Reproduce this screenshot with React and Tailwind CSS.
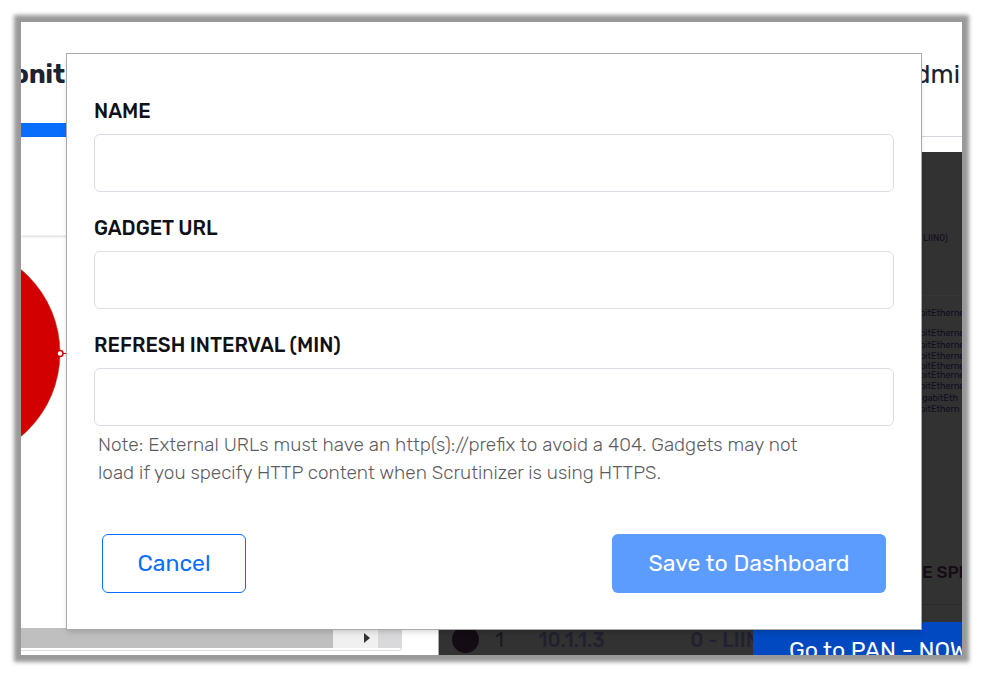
import { useState } from "react";

const FIELDS = [
  { id: "name", label: "NAME" },
  { id: "url", label: "GADGET URL" },
  { id: "interval", label: "REFRESH INTERVAL (MIN)" },
];

const INTERFACES = [
  { y: 164, text: "bitEtherne" },
  { y: 184, text: "bitEtherne" },
  { y: 196, text: "bitEtherne" },
  { y: 207, text: "bitEtherne" },
  { y: 217, text: "bitEtherne" },
  { y: 226, text: "bitEtherne" },
  { y: 237, text: "bitEtherne" },
  { y: 249, text: "igabitEth" },
  { y: 260, text: "bitEthern" },
];

function Header() {
  return (
    <header className="flex h-[115px] shrink-0 items-stretch justify-between border-b border-[#d3d7de] bg-white text-[#20222e]">
      <a href="#monitor" className="-mb-px flex w-28 flex-col justify-between overflow-hidden">
        <span className="-ml-2 pt-[37px] text-[26px] leading-8 font-bold">onit</span>
        <span className="h-[14px] bg-[#0a6efd]" />
      </a>
      <a href="#admin" className="overflow-hidden pt-[37px] pr-0.5 text-[26px] leading-8">
        dmi
      </a>
    </header>
  );
}

function LeftPanel() {
  return (
    <section className="flex w-4/9 shrink-0 flex-col border-r border-[#a8a8a8] bg-white">
      <div className="h-[99px] border-b border-[#eeeff1] shadow-sm" />
      <svg className="w-full flex-1" aria-hidden="true">
        <circle cx="-70" cy="117" r="109" fill="#d20000" stroke="#a33a1c" strokeWidth="0.5" />
        <path d="M39 117.500h20" stroke="#d20000" />
        <circle cx="39" cy="117.500" r="3" fill="#fff" stroke="#d20000" strokeWidth="1.5" />
      </svg>
      {/* horizontal scrollbar */}
      <div className="mr-9 mb-1 flex h-[23px] rounded-br border-r border-b border-[#dcdcdf] pb-0.5">
        <div className="flex-1 bg-[#bfbfbf]" />
        <div className="flex w-[45px] items-center justify-end bg-[#f0f0f1] pr-2">
          <svg width="6" height="10" viewBox="0 0 6 10" aria-hidden="true">
            <path d="M0 0l6 5-6 5z" fill="#333" />
          </svg>
        </div>
        <div className="w-[23px] bg-[#d9d9dc]" />
      </div>
    </section>
  );
}

function RightPanel() {
  return (
    <section className="mt-[15px] flex min-w-0 flex-1 flex-col bg-[#323232] text-[#1b1722]">
      <div className="flex flex-1 flex-col items-end">
        <svg className="h-[400px] w-10" fontSize="9" fill="#110b20" aria-hidden="true">
          <text x="1" y="89">LIIN0)</text>
          <path d="M0 143.500h40" stroke="#383838" />
          {INTERFACES.map((item) => (
            <text key={item.y} x="-2" y={item.y}>{item.text}</text>
          ))}
        </svg>
        <div className="w-10 overflow-hidden border-b border-[#2b2b2b] pt-2 pb-5 text-[17px] leading-6 font-medium whitespace-nowrap text-[#150b14]">
          <span>E SPE</span>
        </div>
      </div>
      <div className="flex h-[33px] shrink-0 overflow-hidden text-[20px] leading-9">
        <span className="mt-1 ml-[13px] size-[27px] shrink-0 rounded-full bg-[#150b14]" />
        <span className="ml-4 w-[43px] shrink-0">1</span>
        <span className="w-[152px] shrink-0 font-medium text-[#222130]">10.1.1.3</span>
        <span className="min-w-0 flex-1 overflow-hidden font-medium whitespace-nowrap text-[#222130]">0 - LIIN</span>
        <button
          type="button"
          className="w-[209px] shrink-0 self-start overflow-hidden bg-[#0049c0] pt-3 pl-9 text-left text-[23px] leading-8 whitespace-nowrap text-white"
        >
          Go to PAN - NOW
        </button>
      </div>
    </section>
  );
}

function GadgetForm() {
  const [values, setValues] = useState({ name: "", url: "", interval: "" });

  return (
    <form
      role="dialog"
      onSubmit={(e) => e.preventDefault()}
      className="relative mt-[31px] mr-10 mb-[25px] ml-[45px] border border-[#aaaaaa] bg-white px-[27px] pt-[45px] pb-9 shadow-md"
    >
      <div className="flex flex-col gap-6">
        {FIELDS.map((field) => (
          <div key={field.id} className="flex flex-col gap-[11px]">
            <label htmlFor={field.id} className="text-[20px] leading-6 font-medium text-[#101016]">
              {field.label}
            </label>
            <input
              id={field.id}
              type="text"
              value={values[field.id]}
              onChange={(e) => setValues({ ...values, [field.id]: e.target.value })}
              className="h-[58px] w-full rounded-md border border-[#d9dde4] px-4 text-[20px] outline-none"
            />
          </div>
        ))}
      </div>
      <p className="mt-[5px] px-1 text-[19px] leading-7 font-light text-[#5c5c5f]">
        Note: External URLs must have an http(s)://prefix to avoid a 404. Gadgets may not
        <br />
        load if you specify HTTP content when Scrutinizer is using HTTPS.
      </p>
      <div className="mt-[47px] flex justify-between px-2 text-[23px]">
        <button type="button" className="h-[59px] w-36 rounded-md border border-[#0a6efd] text-[#0a6efd]">
          Cancel
        </button>
        <button type="submit" className="h-[59px] w-[274px] rounded-md bg-[#5c9cff] text-white">
          Save to Dashboard
        </button>
      </div>
    </form>
  );
}

export default function App() {
  return (
    <div className="min-h-screen bg-white pt-[22px] pr-[42px] pb-[21px] pl-[21px] font-['Rubik','Roboto',sans-serif]">
      <main className="relative shadow-[0_0_4px_7px_#999999]">
        <div className="absolute inset-0 flex flex-col overflow-hidden bg-white">
          <Header />
          <div className="flex min-h-0 flex-1">
            <LeftPanel />
            <RightPanel />
          </div>
        </div>
        <div className="flow-root">
          <GadgetForm />
        </div>
      </main>
    </div>
  );
}
